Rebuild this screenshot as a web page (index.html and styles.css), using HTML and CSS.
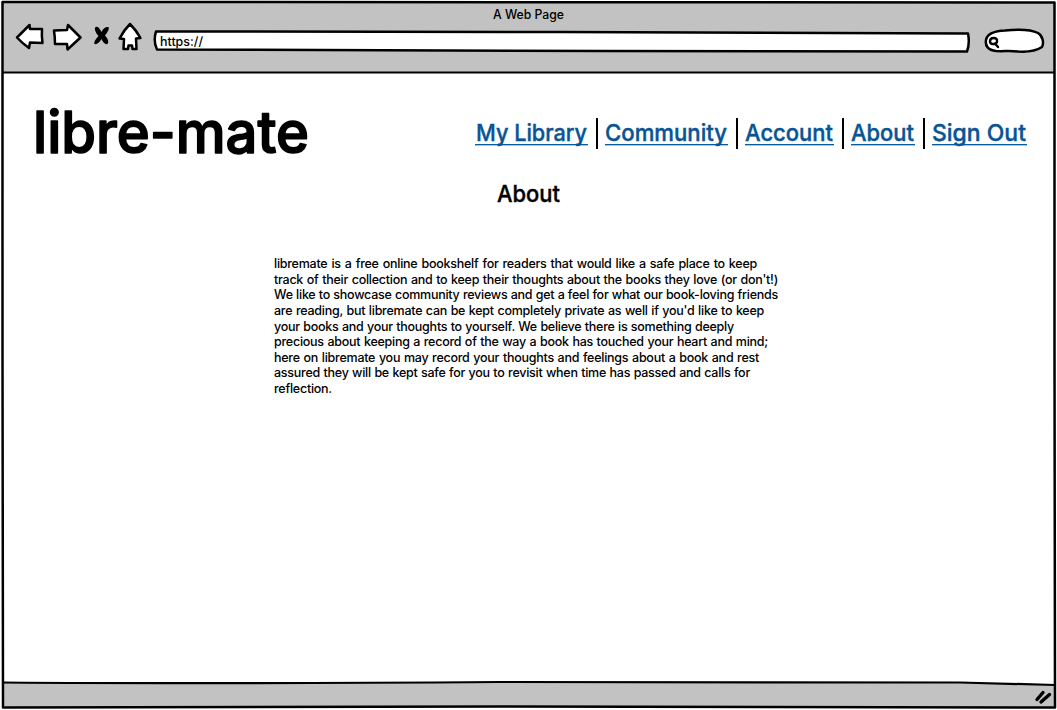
FILE: index.html
```html
<!DOCTYPE html>
<html lang="en">
<head>
<meta charset="utf-8">
<title>A Web Page</title>
<link rel="stylesheet" href="styles.css">
</head>
<body>
<div class="window">
  <header class="chrome">
    <div class="chrome-title"><svg class="title-text" width="72" height="20"><text x="0" y="14" textLength="71" lengthAdjust="spacingAndGlyphs">A Web Page</text></svg></div>
    <div class="toolbar">
      <svg class="controls" width="132" height="34" viewBox="14 20 132 34">
        <path class="ink" d="M17 37.5L29.500 25L30 29L42 29Q41.500 36 42.500 43L30 42.500L29 48Q22 43 17 37.500Z"/>
        <path class="ink" d="M54 30.500L67 30L68 25L80.500 37.500L67.500 49.500L67 44L55 44Q55 37 54 30.500Z"/>
        <path class="cross" d="M95 27.500Q98 25 101.500 32Q104 26.500 108.500 27Q110 29 105 35.500Q110 41 107.500 44Q104 45 101.500 39Q98 45 94.500 44Q93 42 98.500 36Q94 31 95 27.500Z"/>
        <path class="ink" d="M130 24Q136 30 140.500 38L136 38.500L136.500 49L132.500 49L132 45.500L128.500 45.500L128 49L123.500 49L124 39L119.500 38.500Q124 30 130 24Z"/>
      </svg>
      <div class="address">
        <svg width="819" height="26" viewBox="152 29 819 26">
          <path class="ink" d="M156 31.500L560 32L968 33.500Q970 43 967 51.500L600 51L157 49.500Q153 41 156 31.500Z"/>
          <text x="160" y="46" textLength="43" lengthAdjust="spacingAndGlyphs">https://</text>
        </svg>
      </div>
      <svg class="search" width="64" height="30" viewBox="983 26 64 30">
        <path class="ink" d="M996 51C988 50 985 46 986 40C987 34 994 31 1005 30.500C1019 29 1032 30 1038 33C1043 36 1044 43 1042 47C1036 51 1026 52 1018 51.500C1010 50.500 1003 51.500 996 51Z"/>
        <path class="lens" d="M990 41.500Q990 38 993.500 38Q997.500 38 997 41.500Q997 44 993 44Q990 44 990 41.500M995 43.500L998 47"/>
      </svg>
    </div>
  </header>
  <main class="page">
    <div class="masthead">
      <h1 class="logo"><svg width="280" height="70"><text x="-1" y="58" textLength="276" lengthAdjust="spacingAndGlyphs">libre-mate</text></svg></h1>
      <nav class="nav">
        <a class="link"><svg width="113" height="31"><text x="1" y="23" textLength="111" lengthAdjust="spacingAndGlyphs">My Library</text></svg></a>
        <a class="link"><svg width="123" height="31"><text x="0" y="23" textLength="122" lengthAdjust="spacingAndGlyphs">Community</text></svg></a>
        <a class="link"><svg width="89" height="31"><text x="0" y="23" textLength="88" lengthAdjust="spacingAndGlyphs">Account</text></svg></a>
        <a class="link"><svg width="64" height="31"><text x="0" y="23" textLength="63" lengthAdjust="spacingAndGlyphs">About</text></svg></a>
        <a class="link"><svg width="95" height="31"><text x="0" y="23" textLength="94" lengthAdjust="spacingAndGlyphs">Sign Out</text></svg></a>
      </nav>
    </div>
    <h2 class="heading"><svg width="66" height="32"><text x="1" y="24" textLength="63" lengthAdjust="spacingAndGlyphs">About</text></svg></h2>
    <p class="copy">
      <span class="line w483">libremate is a free online bookshelf for readers that would like a safe place to keep</span>
      <span class="line w504">track of their collection and to keep their thoughts about the books they love (or don't!)</span>
      <span class="line w504">We like to showcase community reviews and get a feel for what our book-loving friends</span>
      <span class="line w490">are reading, but libremate can be kept completely private as well if you'd like to keep</span>
      <span class="line w460">your books and your thoughts to yourself. We believe there is something deeply</span>
      <span class="line w494">precious about keeping a record of the way a book has touched your heart and mind;</span>
      <span class="line w485">here on libremate you may record your thoughts and feelings about a book and rest</span>
      <span class="line w476">assured they will be kept safe for you to revisit when time has passed and calls for</span>
      <span class="line w57">reflection.</span>
    </p>
  </main>
  <footer class="status"></footer>
  <svg class="frame" width="1057" height="710" viewBox="0 0 1057 710">
    <path class="slant" d="M3 682.500L500 683L960 682.500L1055 685V680H3Z"/>
    <path class="edge" d="M2.500 2L1054.500 2.500L1054.500 350L1055 707.500L500 706.500Q250 707.500 3 707.500L2.500 350Z"/>
    <path class="edge thin" d="M3 72.500L500 72.500L1054 72.500M3 682.500Q200 684 500 682L960 682.500L1055 685"/>
    <path class="grip" d="M1037 699.500L1043 692.500M1041 702L1049.500 694.500"/>
  </svg>
</div>
</body>
</html>
```
FILE: styles.css
```css
* { box-sizing: border-box; }
body {
  margin: 0;
  background: #fff;
  color: #000;
  font-family: Inter, "Open Sans", sans-serif;
}
svg { display: block; overflow: visible; }
.window {
  position: relative;
  display: flex;
  flex-direction: column;
  width: 1057px;
  height: 710px;
  overflow: hidden;
}
.chrome {
  height: 71px;
  margin: 2px 2px 0;
  background: #c2c2c2;
}
.chrome-title {
  display: flex;
  justify-content: center;
  height: 18px;
  padding-top: 3px;
}
.chrome text { font-size: 12.5px; font-weight: 500; }
.toolbar { display: flex; padding-left: 12px; }
.address { padding: 9px 0 0 6px; }
.search { margin: 6px 0 0 12px; }
.ink { fill: #fff; stroke: #000; stroke-width: 2.5; stroke-linejoin: round; }
.cross { fill: #000; }
.lens { fill: none; stroke: #000; stroke-width: 2.4; stroke-linecap: round; }
.page { flex: 1; }
.masthead {
  display: flex;
  justify-content: space-between;
  padding: 22px 30px 0 34px;
}
.logo { margin: 0; font-size: 58px; font-weight: 500; }
.logo text { stroke: #000; stroke-width: 1.6; stroke-linejoin: round; }
.nav { display: flex; padding-top: 23px; font-size: 23.5px; font-weight: 500; }
.link { display: flex; }
.link svg {
  height: 27px;
  border-bottom: 1.5px solid #085a9e;
  box-shadow: 0 1px 0 #a9c6de;
}
.link text { fill: #085496; stroke: #085496; stroke-width: 0.4; }
.link:not(:last-child)::after {
  content: "";
  width: 2px;
  height: 31px;
  margin: 0 7px 0 8px;
  background: #000;
}
.heading {
  display: flex;
  justify-content: center;
  margin: 13px 0 0;
  font-size: 23.5px;
  font-weight: 500;
}
.heading text { stroke: #000; stroke-width: 0.4; }
.copy {
  margin: 46px 0 0 274px;
  font-size: 12.5px;
  font-weight: 500;
  line-height: 15.62px;
  letter-spacing: -0.25px;
}
.line { display: block; white-space: nowrap; text-align-last: justify; }
.w483 { width: 483px; }
.w504 { width: 504px; }
.w490 { width: 490px; }
.w460 { width: 460px; }
.w494 { width: 494px; }
.w485 { width: 485px; }
.w476 { width: 476px; }
.w57 { width: 57px; }
.status { height: 25px; margin: 0 2px 3px; background: #c2c2c2; }
.frame { position: absolute; inset: 0; pointer-events: none; }
.slant { fill: #fff; }
.edge { fill: none; stroke: #000; stroke-width: 2.5; stroke-linejoin: round; }
.thin { stroke-width: 2.2; }
.grip { stroke: #000; stroke-width: 3.4; stroke-linecap: round; }
```
